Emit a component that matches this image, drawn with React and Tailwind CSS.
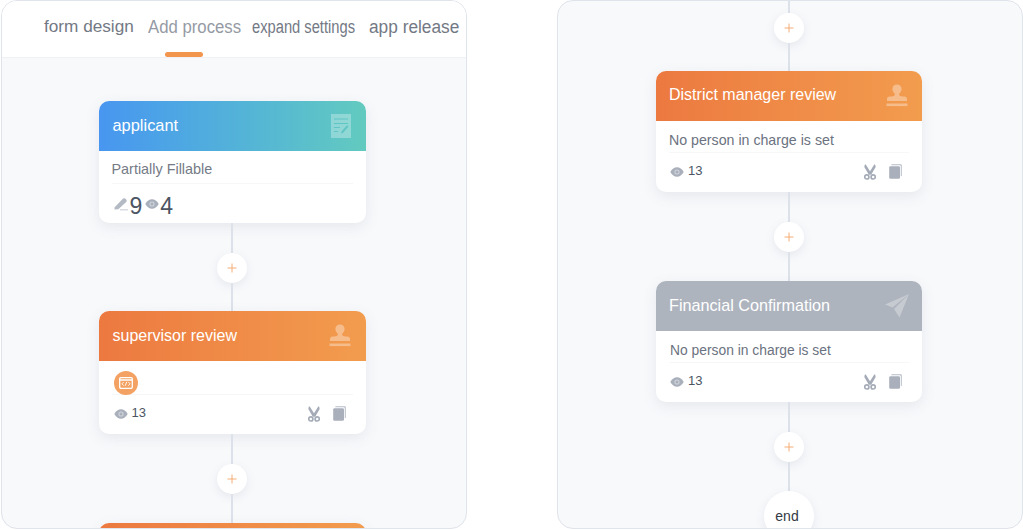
import React from "react";

const font = "font-['Liberation_Sans',Arial,sans-serif]";

function Eye({ className = "" }) {
  return (
    <svg viewBox="0 0 14 10" className={`w-[14px] h-[10px] shrink-0 ${className}`}>
      <path d="M0.3 5C2 1.8 4.4 0.3 7 0.3S12 1.8 13.7 5C12 8.2 9.6 9.7 7 9.7S2 8.2 0.3 5Z" fill="#a9b0bb" />
      <circle cx="7" cy="5" r="2.6" fill="#cfd3da" />
      <circle cx="7" cy="5" r="1.5" fill="#a9b0bb" />
    </svg>
  );
}

function Pencil() {
  return (
    <svg viewBox="0 0 14 14" className="w-[14px] h-[14px] shrink-0">
      <path d="M0.5 10.5L8.8 1.8C9.5 1 10.5 1 11.2 1.6L12.2 2.6C12.9 3.3 12.9 4.2 12.2 4.9L4.3 12.2L0.5 12.6Z" fill="#b4bac4" />
      <rect x="6" y="12.2" width="8" height="1.2" fill="#cfd3da" />
    </svg>
  );
}

function Scissors() {
  return (
    <svg viewBox="0 0 12 16" className="w-[12px] h-[16px]">
      <path d="M1.6 0.2L7.4 9.4L5 10.9L0.6 3.4C0.1 2.2 0.6 0.8 1.6 0.2Z" fill="#a4abb7" />
      <path d="M10.4 0.2L4.6 9.4L7 10.9L11.4 3.4C11.9 2.2 11.4 0.8 10.4 0.2Z" fill="#a4abb7" />
      <circle cx="2.8" cy="12.9" r="2.1" fill="none" stroke="#a4abb7" strokeWidth="1.7" />
      <circle cx="9.2" cy="12.9" r="2.1" fill="none" stroke="#a4abb7" strokeWidth="1.7" />
    </svg>
  );
}

function Copy() {
  return (
    <svg viewBox="0 0 13 15" className="w-[13px] h-[15px]">
      <path d="M3.2 0.3H11.6C12.3 0.3 12.8 0.8 12.8 1.5V11.2C12.8 11.9 12.3 12.3 11.8 12.3V2.2C11.8 1.6 11.4 1.3 10.8 1.3H2.2C2.2 0.7 2.6 0.3 3.2 0.3Z" fill="#b7bcc6" />
      <rect x="0.2" y="2.2" width="10.8" height="12.6" rx="1.4" fill="#a9b0bb" />
    </svg>
  );
}

function FormIcon() {
  return (
    <svg viewBox="0 0 20 24" className="w-[20px] h-[24px]">
      <path
        fillRule="evenodd"
        fill="#fff"
        fillOpacity=".3"
        d="M0 0H20V24H0ZM3 4.5V5.5H17V4.5ZM3 9V10H17V9ZM3 13V14H9V13ZM3 17V18H7V17ZM10 19.5L12 19L17.5 12.5L16 11.2L10.5 17.5Z"
      />
    </svg>
  );
}

function StampIcon() {
  return (
    <svg viewBox="0 0 22 24" className="w-[22px] h-[24px]" fill="#fff" fillOpacity=".35">
      <path d="M11 0.5C13.8 0.5 15.6 2.6 15.6 5C15.6 7 14.4 8.4 13.4 9.6C13 10.2 13.1 11 13.6 11.6C14.2 12.4 16 12.6 18.5 12.6C20 12.6 21 13.6 21 15V17H1V15C1 13.6 2 12.6 3.5 12.6C6 12.6 7.8 12.4 8.4 11.6C8.9 11 9 10.2 8.6 9.6C7.6 8.4 6.4 7 6.4 5C6.4 2.6 8.2 0.5 11 0.5Z" />
      <rect x="0.5" y="19.5" width="21" height="2.6" />
    </svg>
  );
}

function PlaneIcon() {
  return (
    <svg viewBox="0 0 24 24" className="w-[24px] h-[24px]" fill="#fff" fillOpacity=".3">
      <path d="M24 0L0 10.5L7.5 13.5Z" />
      <path d="M24 0L9 15L14.5 23.5Z" />
    </svg>
  );
}

function CodeBadge() {
  return (
    <div className="w-6 h-6 rounded-full bg-[#f3a263] flex items-center justify-center">
      <svg viewBox="0 0 14 12" className="w-[14px] h-[12px]">
        <rect x="0.7" y="0.7" width="12.6" height="10.6" rx="1.2" fill="none" stroke="#fff" strokeWidth="1.3" />
        <path d="M0.7 3H13.3" stroke="#fff" strokeWidth="1.6" />
        <path d="M4.6 5L3 6.8L4.6 8.6M9.4 5L11 6.8L9.4 8.6M7.8 4.8L6.2 8.8" fill="none" stroke="#fff" strokeWidth=".9" />
      </svg>
    </div>
  );
}

function Connector({ top = 30, bottom = 28 }) {
  return (
    <div className="flex flex-col items-center">
      <div className="w-[2px] bg-[#dde2ea]" style={{ height: top }} />
      <div className="w-[30px] h-[30px] rounded-full bg-white shadow-[0_3px_10px_rgba(90,105,130,0.12)] flex items-center justify-center">
        <svg viewBox="0 0 10 10" className="w-[10px] h-[10px]">
          <path d="M5 0.5V9.5M0.5 5H9.5" stroke="#f5ac76" strokeWidth="1" />
        </svg>
      </div>
      <div className="w-[2px] bg-[#dde2ea]" style={{ height: bottom }} />
    </div>
  );
}

function Actions() {
  return (
    <div className="ml-auto flex items-center gap-[13px] pr-[7px]">
      <Scissors />
      <Copy />
    </div>
  );
}

function ViewCount() {
  return (
    <div className="flex items-center">
      <Eye />
      <span className="ml-[4px] text-[13px] leading-none text-[#4b5563] relative -top-px">13</span>
    </div>
  );
}

function Card({ title, headerClass, titleClass = "text-[16px]", icon, children, widthClass = "w-[267px]" }) {
  return (
    <div className={`${widthClass} rounded-[10px] bg-white shadow-[0_4px_14px_rgba(90,105,130,0.12)] overflow-hidden`}>
      <div className={`h-[50px] pl-[13px] flex items-center justify-between text-white ${headerClass}`}>
        <span className={titleClass}>{title}</span>
        {icon}
      </div>
      {children}
    </div>
  );
}

function NoPersonBody({ textClass, pad = "pl-[13px]" }) {
  return (
    <div className="px-[13px]">
      <div className={`h-[32px] flex items-end border-b border-[#f6f7f9] text-[#6b7280] ${textClass} ${pad}`}>
        <span className="leading-[22px] -ml-[13px] relative -top-[1px]">No person in charge is set</span>
      </div>
      <div className="h-[39px] pb-[2px] flex items-center pl-px">
        <ViewCount />
        <Actions />
      </div>
    </div>
  );
}

const orange = "bg-gradient-to-r from-[#ec7940] to-[#f29c4e]";

export default function App() {
  return (
    <div className={`w-[1023px] h-[530px] bg-white flex gap-[90px] pl-px overflow-hidden ${font}`}>
      {/* left phone */}
      <div className="w-[466px] h-[529px] shrink-0 rounded-[16px] border border-[#dfe3ea] bg-[#f8f9fb] overflow-hidden">
        <div className="h-[57px] bg-white border-b border-[#f0f1f4] flex pl-[42px]">
          <div className="w-[104px] pt-[14px] text-[17.2px] leading-[22px] text-[#737984] whitespace-nowrap">form design</div>
          <div className="w-[104px] pt-[15px] flex flex-col justify-between">
            <span className="text-[18px] leading-[22px] text-[#959aa4] whitespace-nowrap origin-left scale-x-[0.93]">Add process</span>
            <span className="ml-[17px] w-[38px] h-[5px] rounded-full bg-[#f2954d]" />
          </div>
          <div className="w-[117px] pt-[15px] text-[18px] leading-[22px] text-[#737984] whitespace-nowrap origin-left scale-x-[0.817]">expand settings</div>
          <div className="pt-[15px] text-[18px] leading-[22px] text-[#737984] whitespace-nowrap origin-left scale-x-[0.96]">app release</div>
        </div>
        <div className="flex flex-col items-center pr-[4px] pt-[43px]">
          <Card
            title="applicant"
            titleClass="text-[16.4px] ml-px relative -top-px"
            headerClass="pr-[15px] bg-gradient-to-r from-[#4896f0] to-[#63cabf]"
            icon={<FormIcon />}
          >
            <div className="px-[13px]">
              <div className="h-[33px] flex items-end border-b border-[#f6f7f9] text-[14.4px] text-[#757b86]">
                <span className="leading-[26px] relative -top-[1px]">Partially Fillable</span>
              </div>
              <div className="h-[39px] pt-[5px] flex items-center pl-[2px] text-[23px] leading-none text-[#4b5563]">
                <span className="relative -top-[2px]"><Pencil /></span>
                <span className="ml-[2px]">9</span>
                <span className="ml-[3px] relative -top-[2px]"><Eye /></span>
                <span className="ml-px">4</span>
              </div>
            </div>
          </Card>
          <Connector />
          <Card title="supervisor review" titleClass="text-[16px] ml-px" headerClass={`pr-[15px] ${orange}`} icon={<StampIcon />}>
            <div className="px-[13px]">
              <div className="h-[34px] pt-[10px] pl-[2px] border-b border-[#f6f7f9]">
                <CodeBadge />
              </div>
              <div className="h-[39px] pb-[2px] flex items-center pl-[2px]">
                <ViewCount />
                <Actions />
              </div>
            </div>
          </Card>
          <Connector bottom={29} />
          <Card title="" headerClass={orange} />
        </div>
      </div>

      {/* right phone */}
      <div className="w-[466px] h-[529px] shrink-0 rounded-[16px] border border-[#dfe3ea] bg-[#f8f9fb] overflow-hidden">
        <div className="flex flex-col items-center pr-[3px]">
          <Connector top={12} />
          <div className="ml-px">
            <Card title="District manager review" widthClass="w-[266px]" headerClass={`pr-[14px] ${orange}`} titleClass="text-[16px] relative -top-[1px]" icon={<StampIcon />}>
              <NoPersonBody textClass="text-[14.2px]" />
            </Card>
          </div>
          <Connector bottom={29} />
          <div className="ml-px">
            <Card title="Financial Confirmation" widthClass="w-[266px]" titleClass="text-[16.2px] relative -top-px" headerClass="pr-[13px] bg-[#aeb4be]" icon={<PlaneIcon />}>
              <NoPersonBody textClass="text-[13.85px]" pad="pl-[14px]" />
            </Card>
          </div>
          <Connector bottom={29} />
          <div className="w-[50px] h-[50px] shrink-0 rounded-full bg-white shadow-[0_3px_10px_rgba(90,105,130,0.12)] flex items-center justify-center pr-[3px] text-[14px] text-[#333a45]">
            end
          </div>
        </div>
      </div>
    </div>
  );
}
